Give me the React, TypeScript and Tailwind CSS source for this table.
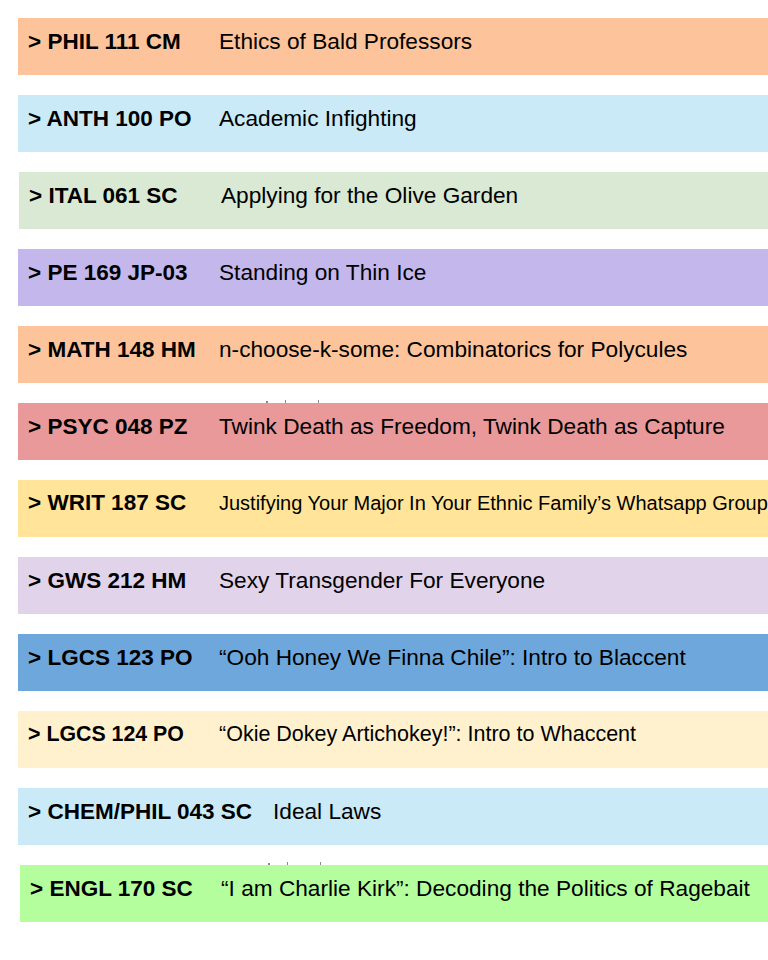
import React from 'react';

type Course = {
    code: string;
    title: string;
    bar: string;
    codeBox: string;
    codeSize: string;
    titleSize: string;
    ghost?: boolean;
};

const courses: Course[] = [
    { code: '> PHIL 111 CM', title: 'Ethics of Bald Professors', bar: 'ml-[18px] bg-[#fdc49b]', codeBox: 'w-[191px]', codeSize: 'text-[22.5px]', titleSize: 'text-[22.67px]' },
    { code: '> ANTH 100 PO', title: 'Academic Infighting', bar: 'ml-[18px] bg-[#c9eaf6]', codeBox: 'w-[191px]', codeSize: 'text-[22.5px]', titleSize: 'text-[22.67px]' },
    { code: '> ITAL 061 SC', title: 'Applying for the Olive Garden', bar: 'ml-[19px] bg-[#d9e9d3]', codeBox: 'w-[192px]', codeSize: 'text-[22.5px]', titleSize: 'text-[22.67px]' },
    { code: '> PE 169 JP-03', title: 'Standing on Thin Ice', bar: 'ml-[18px] bg-[#c4b7ec]', codeBox: 'w-[191px]', codeSize: 'text-[22.5px]', titleSize: 'text-[22.67px]' },
    { code: '> MATH 148 HM', title: 'n-choose-k-some: Combinatorics for Polycules', bar: 'ml-[18px] bg-[#fdc49b]', codeBox: 'w-[191px]', codeSize: 'text-[22.5px]', titleSize: 'text-[22.67px]' },
    { code: '> PSYC 048 PZ', title: 'Twink Death as Freedom, Twink Death as Capture', bar: 'ml-[18px] bg-[#e99999]', codeBox: 'w-[191px]', codeSize: 'text-[22.5px]', titleSize: 'text-[22.67px]', ghost: true },
    { code: '> WRIT 187 SC', title: 'Justifying Your Major In Your Ethnic Family’s Whatsapp Group', bar: 'ml-[18px] bg-[#ffe499]', codeBox: 'w-[191px]', codeSize: 'text-[22.5px]', titleSize: 'text-[20px]' },
    { code: '> GWS 212 HM', title: 'Sexy Transgender For Everyone', bar: 'ml-[18px] bg-[#e0d3ea]', codeBox: 'w-[191px]', codeSize: 'text-[22.5px]', titleSize: 'text-[22.67px]' },
    { code: '> LGCS 123 PO', title: '“Ooh Honey We Finna Chile”: Intro to Blaccent', bar: 'ml-[18px] bg-[#6ea7dc]', codeBox: 'w-[191px]', codeSize: 'text-[22.5px]', titleSize: 'text-[22.67px]' },
    { code: '> LGCS 124 PO', title: '“Okie Dokey Artichokey!”: Intro to Whaccent', bar: 'ml-[18px] bg-[#fff1cd]', codeBox: 'w-[191px]', codeSize: 'text-[21.33px]', titleSize: 'text-[21.5px]' },
    { code: '> CHEM/PHIL 043 SC', title: 'Ideal Laws', bar: 'ml-[18px] bg-[#c9eaf6]', codeBox: 'w-[245px]', codeSize: 'text-[22.5px]', titleSize: 'text-[22.67px]' },
    { code: '> ENGL 170 SC', title: '“I am Charlie Kirk”: Decoding the Politics of Ragebait', bar: 'ml-[20px] bg-[#b5fe9d]', codeBox: 'w-[191px]', codeSize: 'text-[22.5px]', titleSize: 'text-[22.67px]', ghost: true },
];

function CourseBar({ c }: { c: Course }) {
    return (
        <div className={`relative flex h-[57px] w-[750px] shrink-0 items-baseline pt-[10px] pl-[10px] ${c.bar}`}>
            {/* bits of text peeking out from behind the bar */}
            {c.ghost && (
                <>
                    <span className="absolute -top-[2px] left-[248px] h-[2px] w-[2px] bg-[#8a8a8a]" />
                    <span className="absolute -top-[3px] left-[267px] h-[3px] w-[1px] bg-[#8a8a8a]" />
                    <span className="absolute -top-[3px] left-[300px] h-[3px] w-[1px] bg-[#8a8a8a]" />
                </>
            )}
            <span className={`shrink-0 leading-[26px] font-bold whitespace-nowrap text-black ${c.codeSize} ${c.codeBox}`}>
                {c.code}
            </span>
            <span className={`leading-[26px] whitespace-nowrap text-black ${c.titleSize}`}>
                {c.title}
            </span>
        </div>
    );
}

export default function App() {
    return (
        <div
            className="h-[960px] w-[768px] overflow-hidden bg-white"
            style={{ fontFamily: '"Liberation Sans", Arial, sans-serif' }}
        >
            <div className="flex flex-col gap-[20px] pt-[18px]">
                {courses.map((c) => (
                    <CourseBar key={c.code} c={c} />
                ))}
            </div>
        </div>
    );
}
